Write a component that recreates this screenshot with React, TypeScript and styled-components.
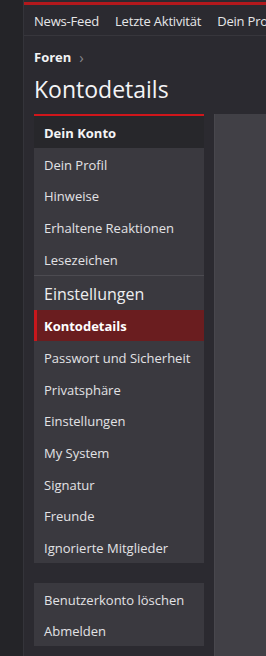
import styled, { createGlobalStyle } from "styled-components";

const Global = createGlobalStyle`
  html, body {
    margin: 0;
    padding: 0;
    background: #242428;
    font-family: "Open Sans", "Noto Sans", sans-serif;
    color: #e4e4e6;
  }
  * { box-sizing: border-box; }
`;

const Page = styled.div`
  display: flex;
  width: 266px;
  min-height: 656px;
  overflow: hidden;
`;

const Gutter = styled.div`
  flex: 0 0 24px;
  background: #242428;
  border-right: 1px solid #34343a;
`;

const Main = styled.div`
  flex: 1;
  min-width: 0;
  display: flex;
  flex-direction: column;
  background: #2b2a30;
  padding-top: 2px;
`;

const RedStrip = styled.div`
  height: 3px;
  background: #b3181c;
`;

const Nav = styled.nav`
  height: 31px;
  display: flex;
  align-items: center;
  padding: 1px 2px 0;
  border-bottom: 1px solid #37363c;
  white-space: nowrap;
  overflow: hidden;
`;

const NavLink = styled.a`
  font-size: 13px;
  letter-spacing: -0.2px;
  color: #e6e6e8;
  padding: 0 8px;
  text-decoration: none;
`;

const Content = styled.div`
  flex: 1;
  display: flex;
  flex-direction: column;
  padding: 11px 0 0 10px;
`;

const Crumbs = styled.div`
  display: flex;
  align-items: center;
  gap: 8px;
  height: 20px;
  font-size: 13px;
  font-weight: 700;
  color: #f2f2f4;
`;

const Chevron = styled.span`
  color: #85858b;
  font-weight: 400;
  font-size: 15px;
  line-height: 1;
`;

const Title = styled.h1`
  margin: 6px 0 9px;
  font-size: 23px;
  font-weight: 400;
  line-height: 32px;
  color: #f4f4f6;
`;

const Body = styled.div`
  flex: 1;
  display: flex;
  gap: 10px;
`;

const Side = styled.aside`
  flex: 0 0 170px;
  display: flex;
  flex-direction: column;
  gap: 20px;
`;

const Block = styled.div<{ $accent?: boolean }>`
  background: #3a393f;
  border-top: ${(p) => (p.$accent ? "2px solid #d0161b" : "none")};
`;

const BlockHead = styled.div`
  height: 32px;
  display: flex;
  align-items: center;
  padding: 1px 10px 0;
  background: #27272b;
  font-size: 13px;
  font-weight: 700;
  color: #f4f4f6;
`;

const Group = styled.div<{ $divided?: boolean }>`
  border-top: ${(p) => (p.$divided ? "1px solid #4c4b51" : "none")};
`;

const GroupTitle = styled.div`
  height: 34px;
  display: flex;
  align-items: center;
  padding: 3px 10px 0;
  font-size: 16px;
  color: #eeeef0;
`;

const Item = styled.a<{ $active?: boolean }>`
  display: flex;
  align-items: center;
  height: 31.67px;
  padding: 2px 10px 0;
  font-size: 13px;
  text-decoration: none;
  white-space: nowrap;
  color: ${(p) => (p.$active ? "#ffffff" : "#e2e2e5")};
  font-weight: ${(p) => (p.$active ? 700 : 400)};
  background: ${(p) => (p.$active ? "#6a1d1f" : "transparent")};
  border-left: ${(p) => (p.$active ? "3px solid #c8171c" : "none")};
  padding-left: ${(p) => (p.$active ? "7px" : "10px")};
`;

const Panel = styled.div`
  flex: 1;
  background: #414046;
  border-left: 1px solid #48474d;
`;

const navLinks = ["News-Feed", "Letzte Aktivität", "Dein Profil"];
const kontoItems = ["Dein Profil", "Hinweise", "Erhaltene Reaktionen", "Lesezeichen"];
const settingsItems = [
  "Kontodetails",
  "Passwort und Sicherheit",
  "Privatsphäre",
  "Einstellungen",
  "My System",
  "Signatur",
  "Freunde",
  "Ignorierte Mitglieder",
];

export default function App() {
  return (
    <>
      <Global />
      <Page>
        <Gutter />
        <Main>
          <RedStrip />
          <Nav>
            {navLinks.map((l) => (
              <NavLink key={l}>{l}</NavLink>
            ))}
          </Nav>
          <Content>
            <Crumbs>
              Foren <Chevron>›</Chevron>
            </Crumbs>
            <Title>Kontodetails</Title>
            <Body>
              <Side>
                <Block $accent>
                  <BlockHead>Dein Konto</BlockHead>
                  <Group>
                    {kontoItems.map((i) => (
                      <Item key={i}>{i}</Item>
                    ))}
                  </Group>
                  <Group $divided>
                    <GroupTitle>Einstellungen</GroupTitle>
                    {settingsItems.map((i) => (
                      <Item key={i} $active={i === "Kontodetails"}>
                        {i}
                      </Item>
                    ))}
                  </Group>
                </Block>
                <Block>
                  <Item>Benutzerkonto löschen</Item>
                  <Item>Abmelden</Item>
                </Block>
              </Side>
              <Panel />
            </Body>
          </Content>
        </Main>
      </Page>
    </>
  );
}
